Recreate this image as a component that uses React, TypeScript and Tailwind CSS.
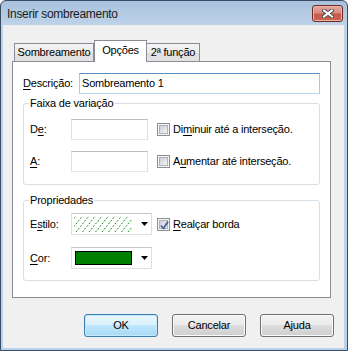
import React from "react";

function U({ children }: { children: React.ReactNode }) {
  return <span className="underline decoration-1 underline-offset-[2px]">{children}</span>;
}

function Checkbox({ checked }: { checked?: boolean }) {
  return (
    <div className="relative w-[13px] h-[13px] shrink-0 border border-[#8e8f8f] bg-[#f4f4f4] p-[1px]">
      <div className="w-full h-full border border-[#aeb3b9] bg-[linear-gradient(135deg,#cbcfd5_0%,#e4e6e9_60%,#f7f7f7_100%)]" />
      {checked && (
        <svg className="absolute left-[1px] top-[1px]" width="11" height="11" viewBox="0 0 11 11">
          <path d="M2 5.5 L4.5 8.5 L9 1.5" fill="none" stroke="#4a5f97" strokeWidth="1.8" strokeLinejoin="round" />
        </svg>
      )}
    </div>
  );
}

function Arrow() {
  return (
    <svg width="7" height="4" viewBox="0 0 7 4" className="shrink-0">
      <polygon points="0,0 7,0 3.5,4" fill="#000" />
    </svg>
  );
}

function TextBox({ w, children, focused }: { w: string; children?: React.ReactNode; focused?: boolean }) {
  return (
    <div
      className={
        "h-[21px] shrink-0 border flex items-center px-[2px] bg-white " +
        w +
        " " +
        (focused
          ? "border-[#a4c9e3] border-t-[#5b8fbf] border-b-[#b7d9ed]"
          : "border-[#dcdfe4] border-t-[#b8bbc1] border-b-[#e3e9ef]")
      }
    >
      {children}
    </div>
  );
}

function Hatch() {
  const lines = [];
  for (let i = -2; i < 10; i++) {
    const x = i * 6.5 + 2;
    lines.push(
      <line
        key={i}
        x1={x}
        y1={16}
        x2={x + 13}
        y2={0}
        stroke="#008000"
        strokeWidth="0.9"
        strokeDasharray="1.8 1.6"
      />
    );
  }
  return (
    <svg width="58" height="16" viewBox="0 0 58 16">
      {lines}
    </svg>
  );
}

function Button({ children, primary }: { children: React.ReactNode; primary?: boolean }) {
  return (
    <div
      className={
        "w-[74px] h-[23px] rounded-[3px] border flex items-center justify-center " +
        (primary
          ? "border-[#3c7fb1] bg-[linear-gradient(180deg,#eaf6fd_0%,#d9f0fc_50%,#bee6fd_50%,#a7d9f5_100%)] shadow-[inset_0_0_0_1px_#c4e8fa]"
          : "border-[#707070] bg-[linear-gradient(180deg,#f2f2f2_0%,#ebebeb_50%,#dddddd_50%,#cfcfcf_100%)] shadow-[inset_0_0_0_1px_#fbfbfb]")
      }
    >
      {children}
    </div>
  );
}

export default function App() {
  return (
    <div className="w-[348px] h-[351px] bg-white">
      <div className="w-[348px] h-[351px] flex flex-col border border-[#3a4c63] rounded-t-[6px] overflow-hidden bg-[linear-gradient(180deg,#a9c1dc_0px,#bed3ea_24px,#b9d1ea_100%)] font-['Liberation_Sans',Arial,sans-serif] text-[11px] tracking-[-0.2px] text-black">
        {/* Title bar */}
        <div className="h-[24px] shrink-0 flex items-start justify-between pl-[6px] pr-[4px]">
          <span className="mt-[5px] text-[12px] leading-[16px] tracking-[-0.3px] text-[#1b1b1b]">Inserir sombreamento</span>
          <div className="mt-[4px] w-[31px] h-[17px] rounded-[3px] border border-[#6e2a22] bg-[linear-gradient(180deg,#e5a89f_0%,#d88b80_45%,#c75a4a_55%,#c9654f_100%)] shadow-[inset_0_0_0_1px_#eab5ab] flex items-center justify-center">
            <svg width="12" height="9" viewBox="0 0 12 9">
              <path d="M2 1.5 L10 7.5 M10 1.5 L2 7.5" stroke="#4b4b4b" strokeWidth="4" strokeLinecap="square" />
              <path d="M2 1.5 L10 7.5 M10 1.5 L2 7.5" stroke="#ffffff" strokeWidth="2" strokeLinecap="square" />
            </svg>
          </div>
        </div>

        {/* Client area */}
        <div className="flex-1 ml-[2px] mr-[3px] mb-[2px] bg-[#f0f0f0] flex flex-col pt-[15px] pl-[9px] pr-[13px]">
          {/* Tabs */}
          <div className="h-[21px] flex items-end pl-[2px]">
            <div className="w-[80px] h-[18px] border border-b-0 border-[#898c95] bg-[linear-gradient(180deg,#f3f3f3_0%,#ebebeb_50%,#dedede_50%,#e3e3e3_100%)] flex items-center justify-center">
              Sombreamento
            </div>
            <div className="relative z-10 -mb-[1px] w-[53px] h-[22px] border border-b-0 border-[#898c95] bg-white flex items-center justify-center pb-[3px]">
              Opções
            </div>
            <div className="w-[53px] h-[18px] border border-b-0 border-l-0 border-[#898c95] bg-[linear-gradient(180deg,#f3f3f3_0%,#ebebeb_50%,#dedede_50%,#e3e3e3_100%)] flex items-center justify-center">
              2ª função
            </div>
          </div>

          {/* Panel */}
          <div className="w-[319px] h-[237px] border border-[#898c95] bg-white flex flex-col pt-[11px] px-[10px]">
            <div className="flex items-center h-[21px]">
              <span className="w-[56px]">
                <U>D</U>escrição:
              </span>
              <TextBox w="w-[241px]" focused>
                <span>Sombreamento 1</span>
              </TextBox>
            </div>

            {/* Group 1 */}
            <div className="relative mt-[9px] h-[82px] border border-[#d5dfe5] rounded-[3px] pt-[15px] pl-[6px] flex flex-col gap-[11px]">
              <span className="absolute left-[5px] -top-[8px] px-[1px] bg-white leading-[14px]">Faixa de variação</span>
              <div className="flex items-center h-[21px]">
                <span className="w-[41px]">
                  D<U>e</U>:
                </span>
                <TextBox w="w-[77px]" />
                <div className="ml-[9px]">
                  <Checkbox />
                </div>
                <span className="ml-[3px]">
                  Di<U>m</U>inuir até a interseção.
                </span>
              </div>
              <div className="flex items-center h-[21px]">
                <span className="w-[41px]">
                  <U>A</U>:
                </span>
                <TextBox w="w-[77px]" />
                <div className="ml-[9px]">
                  <Checkbox />
                </div>
                <span className="ml-[3px]">
                  A<U>u</U>mentar até interseção.
                </span>
              </div>
            </div>

            {/* Group 2 */}
            <div className="relative mt-[15px] h-[81px] border border-[#d5dfe5] rounded-[3px] pt-[12px] pl-[6px] flex flex-col gap-[12px]">
              <span className="absolute left-[5px] -top-[8px] px-[1px] bg-white leading-[14px]">Propriedades</span>
              <div className="flex items-center h-[22px]">
                <span className="w-[41px]">
                  E<U>s</U>tilo:
                </span>
                <div className="w-[81px] h-[22px] border border-[#dcdfe4] border-t-[#c4c7cc] bg-white flex items-center pl-[2px] pr-[3px]">
                  <Hatch />
                  <div className="flex-1 flex justify-end">
                    <Arrow />
                  </div>
                </div>
                <div className="ml-[5px]">
                  <Checkbox checked />
                </div>
                <span className="ml-[3px]">
                  <U>R</U>ealçar borda
                </span>
              </div>
              <div className="flex items-center h-[22px]">
                <span className="w-[41px]">
                  <U>C</U>or:
                </span>
                <div className="w-[81px] h-[22px] border border-[#dcdfe4] border-t-[#c4c7cc] bg-white flex items-center pl-[3px] pr-[3px]">
                  <div className="w-[57px] h-[14px] border border-black bg-[#008000]" />
                  <div className="flex-1 flex justify-end">
                    <Arrow />
                  </div>
                </div>
              </div>
            </div>
          </div>

          {/* Buttons */}
          <div className="mt-[16px] flex justify-end gap-[14px] -mr-[3px]">
            <Button primary>OK</Button>
            <Button>Cancelar</Button>
            <Button>Ajuda</Button>
          </div>
        </div>
      </div>
    </div>
  );
}
